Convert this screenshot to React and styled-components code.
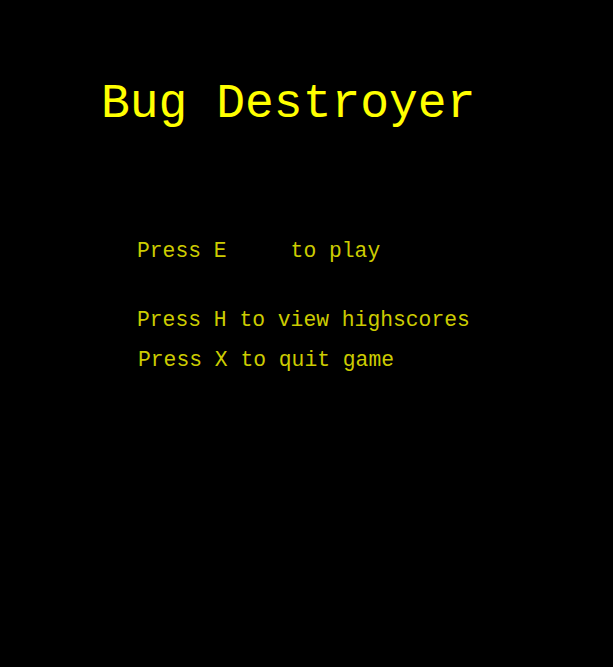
import React from "react";
import styled, { createGlobalStyle } from "styled-components";

const mono = `"Courier New", "Nimbus Mono PS", "FreeMono", Courier, "Liberation Mono", monospace`;

const Global = createGlobalStyle`
  html, body { margin: 0; padding: 0; background: #000; }
  body { font-family: ${mono}; }
`;

const Screen = styled.div`
  width: 613px;
  height: 667px;
  background: #000;
  display: flex;
  flex-direction: column;
`;

const Title = styled.h1`
  margin: 77px 0 0 101px;
  font-family: ${mono};
  font-weight: normal;
  font-size: 48px;
  line-height: 54px;
  color: #ffff00;
`;

const Menu = styled.div`
  display: flex;
  flex-direction: column;
  margin: 108px 0 0 137px;
`;

const Option = styled.div`
  font-family: ${mono};
  font-size: 21.33px;
  line-height: 24px;
  color: #cccc00;
  white-space: pre;
  margin-top: ${(p) => p.$gap || 0}px;
  margin-left: ${(p) => p.$shift || 0}px;
`;

export default function App() {
  return (
    <Screen>
      <Global />
      <Title>Bug Destroyer</Title>
      <Menu>
        <Option>Press E     to play</Option>
        <Option $gap={45}>Press H to view highscores</Option>
        <Option $gap={16} $shift={1}>Press X to quit game</Option>
      </Menu>
    </Screen>
  );
}
